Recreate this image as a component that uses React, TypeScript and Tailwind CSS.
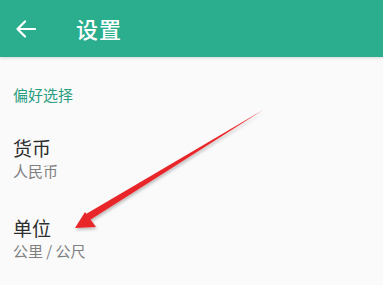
const font = { fontFamily: '"Noto Sans CJK SC", "Noto Sans", sans-serif' };

const Item = ({ title, value }: { title: string; value: string }) => (
  <div className="px-[13px]">
    <div className="text-[19px] leading-[24px] text-[#2e2e2e]">{title}</div>
    <div className="text-[15px] leading-[22px] text-[#808080]">{value}</div>
  </div>
);

export default function App() {
  return (
    <div className="relative w-[383px] h-[285px] overflow-hidden bg-[#fafafa]" style={font}>
      <header className="h-[57px] bg-[#2aae8e] flex items-center shadow-[0_1px_3px_rgba(0,0,0,0.15)]">
        <svg width="20" height="18" viewBox="0 0 20 18" className="ml-[16px]">
          <path d="M19 9H2M9 1.5L1.5 9L9 16.5" stroke="#fff" strokeWidth="2.2" fill="none" strokeLinecap="round" strokeLinejoin="round" />
        </svg>
        <h1 className="ml-[40px] text-[22px] font-medium text-white tracking-[1px]">设置</h1>
      </header>

      <div className="pt-[27px]">
        <div className="px-[13px] text-[15px] leading-[22px] text-[#2a9d80]">偏好选择</div>
        <div className="mt-[30px]">
          <Item title="货币" value="人民币" />
        </div>
        <div className="mt-[34px]">
          <Item title="单位" value="公里 / 公尺" />
        </div>
      </div>

      <svg className="absolute left-0 top-0" width="383" height="285" viewBox="0 0 383 285">
        <defs>
          <filter id="sh" x="-10%" y="-10%" width="120%" height="120%">
            <feDropShadow dx="1" dy="2" stdDeviation="1.5" floodColor="#000" floodOpacity="0.25" />
          </filter>
        </defs>
        <g filter="url(#sh)" fill="#e8282c">
          <polygon points="263,110 90,220 86,214" />
          <polygon points="75,228 85,212 96,227" />
        </g>
      </svg>
    </div>
  );
}
